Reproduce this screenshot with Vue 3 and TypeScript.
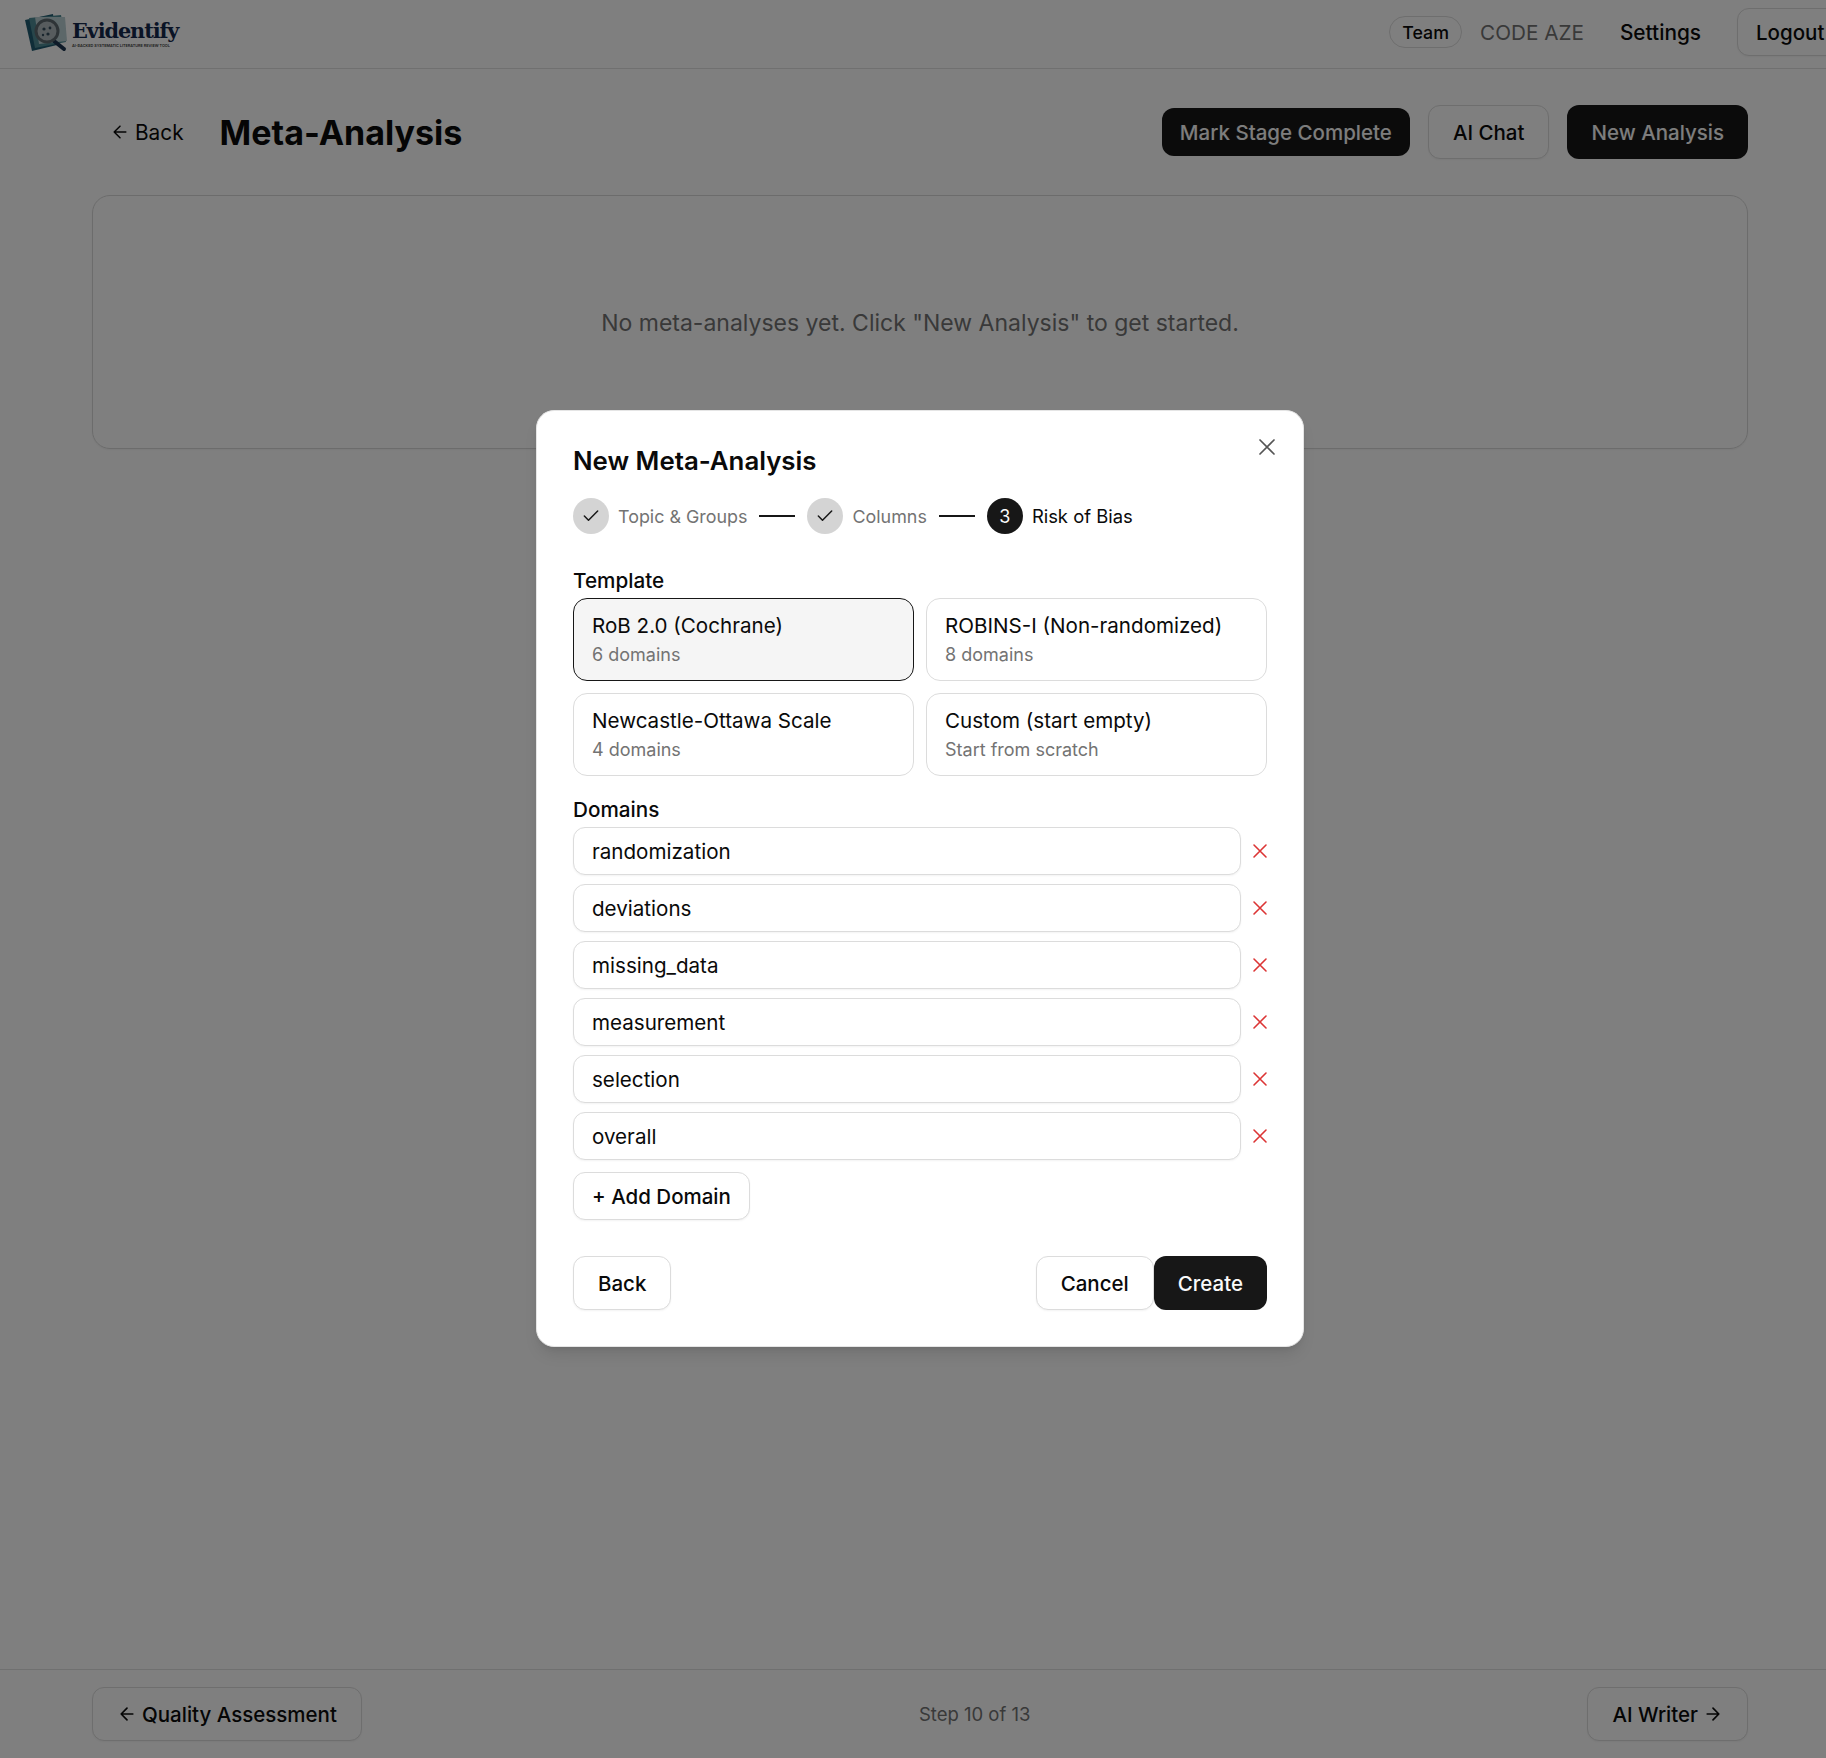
<script setup lang="ts">
const templates = [
  { name: 'RoB 2.0 (Cochrane)', sub: '6 domains', active: true },
  { name: 'ROBINS-I (Non-randomized)', sub: '8 domains', active: false },
  { name: 'Newcastle-Ottawa Scale', sub: '4 domains', active: false },
  { name: 'Custom (start empty)', sub: 'Start from scratch', active: false },
]
const domains: string[] = ['randomization', 'deviations', 'missing_data', 'measurement', 'selection', 'overall']
</script>

<template>
  <div class="page">
    <header class="topbar">
      <div class="brand">
        <svg class="logo-mark" width="46" height="42" viewBox="0 0 46 42">
          <path d="M2 9 L30 3 L34 34 L9 40 Z" fill="#1f5a70" />
          <path d="M6 7 L38 4 L43 31 L12 37 Z" fill="#4f8a94" />
          <path d="M12 6 L42 6 L44 30 L16 33 Z" fill="#b8ced2" />
          <path d="M31 30 L41 38" stroke="#1c3550" stroke-width="4" stroke-linecap="round" />
          <circle cx="24" cy="20" r="11" fill="#aeb9bd" stroke="#5d686e" stroke-width="3" />
          <circle cx="21" cy="18" r="1.6" fill="#344c5c" />
          <circle cx="27" cy="17" r="1.4" fill="#344c5c" />
          <circle cx="25" cy="23" r="1.6" fill="#344c5c" />
          <circle cx="20" cy="24" r="1.2" fill="#344c5c" />
        </svg>
        <div class="brand-text">
          <span class="brand-name">Evidentify</span>
          <span class="brand-tag">AI-BACKED SYSTEMATIC LITERATURE REVIEW TOOL</span>
        </div>
      </div>
      <nav class="nav">
        <span class="pill">Team</span>
        <span class="org">CODE AZE</span>
        <span class="nav-link">Settings</span>
        <button class="btn outline logout">Logout</button>
      </nav>
    </header>

    <main class="main">
      <div class="title-row">
        <div class="title-left">
          <button class="ghost">
            <svg width="20" height="20" viewBox="0 0 24 24" fill="none" stroke="currentColor" stroke-width="1.8" stroke-linecap="round" stroke-linejoin="round"><path d="M19 12H5M12 19l-7-7 7-7" /></svg>
            Back
          </button>
          <h1>Meta-Analysis</h1>
        </div>
        <div class="actions">
          <button class="btn dark short">Mark Stage Complete</button>
          <button class="btn outline">AI Chat</button>
          <button class="btn dark">New Analysis</button>
        </div>
      </div>
      <section class="empty"><span class="empty-text">No meta-analyses yet. Click "New Analysis" to get started.</span></section>
    </main>

    <footer class="footer">
      <button class="btn outline foot-btn">
        <svg width="20" height="20" viewBox="0 0 24 24" fill="none" stroke="currentColor" stroke-width="2" stroke-linecap="round" stroke-linejoin="round"><path d="M19 12H5M12 19l-7-7 7-7" /></svg>
        Quality Assessment
      </button>
      <span class="step-count">Step 10 of 13</span>
      <button class="btn outline foot-btn">
        AI Writer
        <svg width="20" height="20" viewBox="0 0 24 24" fill="none" stroke="currentColor" stroke-width="2" stroke-linecap="round" stroke-linejoin="round"><path d="M5 12h14M12 5l7 7-7 7" /></svg>
      </button>
    </footer>

    <div class="overlay">
      <div class="modal">
        <svg class="close" width="24" height="24" viewBox="0 0 24 24" fill="none" stroke="#555" stroke-width="1.7" stroke-linecap="round"><path d="M5 5l14 14M19 5L5 19" /></svg>
        <h2>New Meta-Analysis</h2>
        <div class="stepper">
          <span class="dot done"><svg width="20" height="20" viewBox="0 0 24 24" fill="none" stroke="#171717" stroke-width="1.8" stroke-linecap="round" stroke-linejoin="round"><path d="M20 6L9 17l-5-5" /></svg></span>
          <span class="step-label">Topic &amp; Groups</span>
          <span class="line"></span>
          <span class="dot done"><svg width="20" height="20" viewBox="0 0 24 24" fill="none" stroke="#171717" stroke-width="1.8" stroke-linecap="round" stroke-linejoin="round"><path d="M20 6L9 17l-5-5" /></svg></span>
          <span class="step-label">Columns</span>
          <span class="line"></span>
          <span class="dot current">3</span>
          <span class="step-label now">Risk of Bias</span>
        </div>

        <div class="field-label first">Template</div>
        <div class="templates">
          <div v-for="t in templates" :key="t.name" class="tpl" :class="{ active: t.active }">
            <div class="tpl-name">{{ t.name }}</div>
            <div class="tpl-sub">{{ t.sub }}</div>
          </div>
        </div>

        <div class="field-label second">Domains</div>
        <div class="domains">
          <div v-for="d in domains" :key="d" class="domain">
            <input class="domain-input" :value="d" />
            <svg class="remove" width="16" height="16" viewBox="0 0 16 16" fill="none" stroke="#dc3535" stroke-width="1.6" stroke-linecap="round"><path d="M2 2l12 12M14 2L2 14" /></svg>
          </div>
        </div>
        <button class="btn outline add">+ Add Domain</button>

        <div class="modal-foot">
          <button class="btn outline">Back</button>
          <div class="foot-right">
            <button class="btn outline">Cancel</button>
            <button class="btn solid">Create</button>
          </div>
        </div>
      </div>
    </div>
  </div>
</template>

<style>
html, body { margin: 0; overflow: hidden; background: #fff; }
</style>

<style scoped>
* { box-sizing: border-box; }
.page {
  position: relative;
  width: 1826px;
  height: 1758px;
  display: flex;
  flex-direction: column;
  overflow: hidden;
  background: #fff;
  color: #0a0a0a;
  font-family: Inter, "Liberation Sans", sans-serif;
}
.topbar {
  height: 69px;
  flex: none;
  display: flex;
  align-items: center;
  justify-content: space-between;
  padding: 0 0 4px 23px;
  border-bottom: 1px solid #e0e0e0;
}
.brand { display: flex; align-items: center; gap: 3px; margin-top: 4px; }
.logo-mark { display: block; margin-top: -4px; }
.brand-text { display: flex; flex-direction: column; line-height: 1; margin-top: 1px; }
.brand-name {
  font-family: "DejaVu Serif", "Liberation Serif", serif;
  font-weight: 700;
  font-size: 20.8px;
  letter-spacing: -1.1px;
  color: #14294d;
}
.brand-tag { font-size: 3.8px; font-weight: 600; color: #3a3a3a; white-space: nowrap; margin-top: 2px; }
.nav { display: flex; align-items: center; margin-right: -32px; }
.pill {
  height: 32px;
  width: 73px;
  display: flex;
  align-items: center;
  justify-content: center;
  border: 1px solid #dcdcdc;
  border-radius: 16px;
  font-size: 17.8px;
  font-weight: 500;
}
.org { margin-left: 18px; font-size: 20.7px; color: #737373; }
.nav-link { margin-left: 36px; font-size: 20.8px; font-weight: 500; }
.btn {
  height: 54px;
  padding: 0 24px;
  border-radius: 12px;
  font-family: inherit;
  font-size: 20.5px;
  font-weight: 500;
  white-space: nowrap;
  display: inline-flex;
  align-items: center;
  justify-content: center;
  gap: 5px;
  cursor: pointer;
}
.outline {
  background: #fff;
  border: 1px solid #dcdcdc;
  color: #0a0a0a;
  box-shadow: 0 1px 2px rgba(0, 0, 0, 0.05);
}
.dark { background: #171717; border: 0; color: #fafafa; }
.short { height: 48px; padding: 0 18px; }
.solid { background: #171717; border: 0; color: #fafafa; }
.logout { height: 48px; margin-left: 36px; padding: 0 18px; width: 121px; justify-content: flex-start; }
.main { flex: 1; padding: 36px 78px 0 92px; }
.title-row { display: flex; align-items: center; justify-content: space-between; height: 54px; }
.title-left { display: flex; align-items: center; gap: 18px; }
.ghost {
  height: 48px;
  padding: 0 18px;
  display: inline-flex;
  align-items: center;
  gap: 5px;
  background: none;
  border: 0;
  font-family: inherit;
  font-size: 20.8px;
  font-weight: 400;
  color: #0a0a0a;
}
h1 { margin: 2px 0 0; font-size: 34px; font-weight: 700; line-height: 40px; }
.actions { display: flex; align-items: center; gap: 18px; }
.empty {
  margin-top: 36px;
  height: 254px;
  display: flex;
  align-items: center;
  justify-content: center;
  padding-top: 1px;
  border: 1px solid #d8d8d8;
  border-radius: 18px;
  box-shadow: 0 1px 2px rgba(0, 0, 0, 0.05);
  color: #737373;
  font-size: 23px;
}
.footer {
  height: 89px;
  flex: none;
  display: flex;
  align-items: center;
  justify-content: space-between;
  padding: 0 78px 0 92px;
  border-top: 1px solid #e0e0e0;
}
.step-count { color: #737373; font-size: 18.5px; }
.overlay {
  position: absolute;
  inset: 0;
  background: rgba(0, 0, 0, 0.5);
}
.modal {
  position: absolute;
  left: 536px;
  top: 410px;
  width: 768px;
  height: 937px;
  padding: 36px;
  background: #fff;
  border: 1px solid #e5e5e5;
  border-radius: 18px;
  box-shadow: 0 10px 15px -3px rgba(0, 0, 0, 0.1), 0 4px 6px -4px rgba(0, 0, 0, 0.1);
}
.close { position: absolute; right: 24px; top: 24px; }
h2 { margin: -2px 0 0; font-size: 25.8px; font-weight: 600; line-height: 32px; }
.stepper { display: flex; align-items: center; margin-top: 21px; height: 36px; }
.dot {
  width: 36px;
  height: 36px;
  flex: none;
  border-radius: 50%;
  display: flex;
  align-items: center;
  justify-content: center;
  font-size: 18px;
}
.done { background: #d4d4d4; }
.current { background: #171717; color: #fafafa; }
.step-label { margin-left: 9px; font-size: 17.9px; color: #737373; }
.now { color: #0a0a0a; font-weight: 400; font-size: 18.4px; }
.line { width: 36px; height: 2px; background: #171717; margin: 0 12px; }
.field-label { font-size: 20.7px; font-weight: 500; line-height: 24px; }
.first { margin-top: 35px; }
.second { margin-top: 22px; }
.templates { display: grid; grid-template-columns: 1fr 1fr; gap: 12px; margin-top: 5px; }
.tpl {
  height: 83px;
  padding: 0 18px;
  display: flex;
  flex-direction: column;
  justify-content: center;
  gap: 3px;
  border: 1px solid #dcdcdc;
  border-radius: 14px;
  background: #fff;
}
.tpl.active { border-color: #171717; background: #f5f5f5; }
.tpl-name { font-size: 20.6px; line-height: 28px; }
.tpl-sub { font-size: 18px; line-height: 24px; color: #737373; }
.domains { display: flex; flex-direction: column; gap: 9px; margin-top: 5px; }
.domain { display: flex; align-items: center; gap: 11px; }
.domain-input {
  flex: 1;
  min-width: 0;
  height: 48px;
  padding: 0 18px;
  border: 1px solid #dcdcdc;
  border-radius: 12px;
  box-shadow: 0 1px 2px rgba(0, 0, 0, 0.05);
  font-family: inherit;
  font-size: 20.6px;
  color: #0a0a0a;
  outline: none;
}
.remove { flex: none; margin-right: -1px; }
.add { height: 48px; padding: 0 18px; margin-top: 12px; }
.modal-foot { display: flex; justify-content: space-between; margin-top: 36px; }
.foot-right { display: flex; }
</style>
